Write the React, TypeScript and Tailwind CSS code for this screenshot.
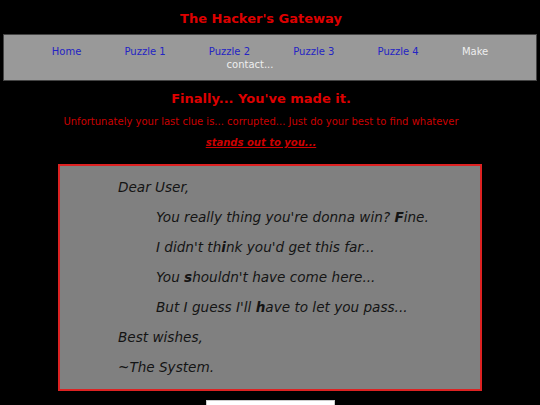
import React from "react";

const links = [
  { label: ["Home"], color: "text-[#2424c4]" },
  { label: ["Puzzle 1"], color: "text-[#2424c4]" },
  { label: ["Puzzle 2"], color: "text-[#2424c4]" },
  { label: ["Puzzle 3"], color: "text-[#2424c4]" },
  { label: ["Puzzle 4"], color: "text-[#2424c4]" },
  { label: ["Make", "contact..."], color: "text-[#eeeeee]" },
];

const Line: React.FC<{ indent?: boolean; children: React.ReactNode }> = ({
  indent,
  children,
}) => (
  <p className={`my-[13px] leading-[17px] ${indent ? "pl-[38px]" : ""}`}>
    {children}
  </p>
);

export default function App() {
  return (
    <div
      className="h-[405px] overflow-hidden bg-black"
      style={{ fontFamily: '"DejaVu Sans", Verdana, sans-serif' }}
    >
      <h1 className="pt-[11px] pr-[18px] text-center text-[13px] font-bold leading-[15px] text-[#dd0000]">
        The Hacker's Gateway
      </h1>

      <nav className="mx-[3px] mt-[8px] border border-[#444444] bg-[#999999] px-[10px] pt-[10px] pb-[9px] text-center text-[10px] leading-[13px]">
        {links.map((l) => (
          <React.Fragment key={l.label.join(" ")}>
            <a href="#" className={`mr-[40px] ${l.color}`}>
              {l.label.map((w, i) => (
                <React.Fragment key={w}>
                  {i > 0 && " "}
                  <span>{w}</span>
                </React.Fragment>
              ))}
            </a>{" "}
          </React.Fragment>
        ))}
      </nav>

      <h2 className="mt-[10px] pr-[18px] text-center text-[13px] font-bold leading-[15px] text-[#dd0000]">
        Finally... You've made it.
      </h2>
      <p className="mt-[5px] pr-[18px] text-center text-[10px] leading-[21px] text-[#cc0000]">
        Unfortunately your last clue is... corrupted... Just do your best to
        find whatever
        <br />
        <em className="font-bold underline">stands out to you...</em>
      </p>

      <div className="mx-auto mt-[11px] w-[424px] border-2 border-[#dd2222] bg-[#808080] pl-[58px] text-[13.6px] italic text-[#141414]">
        <Line>Dear User,</Line>
        <Line indent>
          You really thing you're donna win? <b>F</b>ine.
        </Line>
        <Line indent>
          I didn't th<b>i</b>nk you'd get this far...
        </Line>
        <Line indent>
          You <b>s</b>houldn't have come here...
        </Line>
        <Line indent>
          But I guess I'll <b>h</b>ave to let you pass...
        </Line>
        <Line>Best wishes,</Line>
        <Line>~The System.</Line>
      </div>

      <div className="mx-auto mt-[9px] h-[24px] w-[129px] border border-[#cccccc] bg-white" />
    </div>
  );
}
